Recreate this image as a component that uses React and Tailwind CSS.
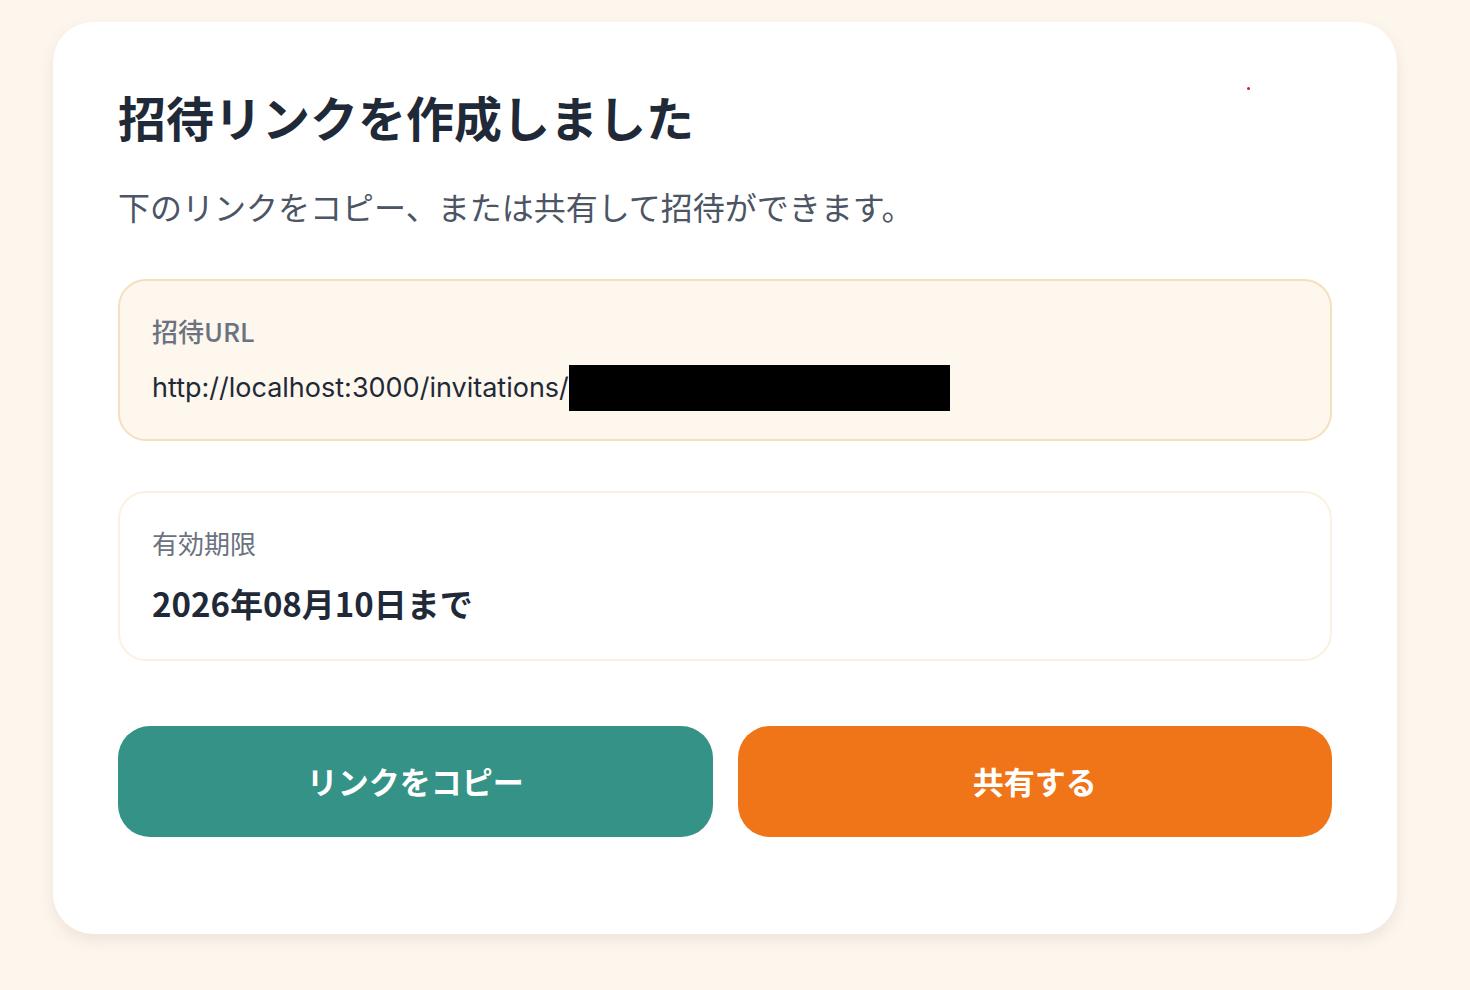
export default function App() {
  const jp = { fontFamily: '"Noto Sans CJK JP", "Noto Sans", sans-serif' };
  return (
    <div className="min-h-[990px] w-full bg-[#fdf6ed] pt-[22px] pl-[53px]" style={jp}>
      <div className="relative flex h-[912px] w-[1344px] flex-col rounded-[40px] bg-white px-[65px] pt-[66px] shadow-[0_6px_14px_rgba(120,100,80,0.12)]">
        <span className="absolute left-[1194px] top-[65px] h-[3px] w-[3px] rounded-full bg-[#c0262b]" />
        <h1 className="text-[48px] leading-[56px] font-bold text-[#1f2937]">招待リンクを作成しました</h1>
        <p className="mt-[42px] text-[32px] leading-[40px] text-[#4b5563]">
          下のリンクをコピー、または共有して招待ができます。
        </p>
        <div className="mt-[53px] flex h-[162px] flex-col rounded-[28px] border-2 border-[#f5dfbd] bg-[#fef7ed] px-[32px] pt-[32px]">
          <div className="text-[26px] leading-[36px] font-medium text-[#6b7280]">招待URL</div>
          <div className="mt-[16px] flex items-center">
            <span
              className="text-[27px] leading-[46px] text-[#1f2937]"
              style={{ fontFamily: 'Inter, "Liberation Sans", sans-serif' }}
            >
              http://localhost:3000/invitations/
            </span>
            <span className="inline-block h-[46px] w-[381px] bg-black" />
          </div>
        </div>
        <div className="mt-[50px] flex h-[170px] flex-col rounded-[28px] border-2 border-[#fcf0df] bg-white px-[32px] pt-[32px]">
          <div className="text-[26px] leading-[36px] text-[#6b7280]">有効期限</div>
          <div className="mt-[18px] text-[33px] leading-[48px] font-bold text-[#1f2937]">2026年08月10日まで</div>
        </div>
        <div className="mt-[65px] grid grid-cols-2 gap-[25px]">
          <button className="flex h-[111px] items-center justify-center rounded-[32px] bg-[#359287] text-[31px] font-bold text-white">
            リンクをコピー
          </button>
          <button className="flex h-[111px] items-center justify-center rounded-[32px] bg-[#f07519] text-[31px] font-bold text-white">
            共有する
          </button>
        </div>
      </div>
    </div>
  );
}
